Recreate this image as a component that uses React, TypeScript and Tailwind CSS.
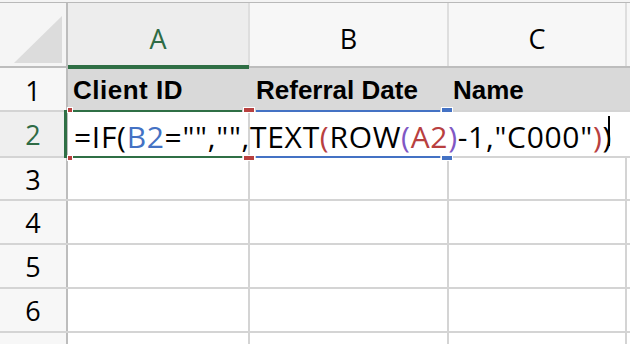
const rowNums = [3, 4, 5, 6];

function Seg({ c, children }: { c?: string; children: React.ReactNode }) {
  return <span className={c}>{children}</span>;
}

export default function App() {
  return (
    <div className="relative w-[630px] h-[344px] overflow-hidden bg-white font-['Open_Sans',sans-serif]">
      {/* top strip */}
      <div className="h-[3px] bg-[#f4f4f4] border-b border-[#b9b9b9]"></div>

      {/* column headers */}
      <div className="flex h-[65px] border-b-2 border-[#bdbdbd] bg-[#f7f7f7]">
        <div className="w-[68px] shrink-0 border-r-2 border-[#bdbdbd] bg-[#f5f5f5] relative">
          <svg width="66" height="63" className="absolute left-0 top-0">
            <polygon points="14,60 62,60 62,13" fill="#dcdcdc" />
          </svg>
        </div>
        <div className="w-[182px] shrink-0 border-r-2 border-[#dedede] bg-[#ededed] flex items-end justify-center pb-[7px] text-[27px] text-[#2e6b45]">
          A
        </div>
        <div className="w-[199px] shrink-0 border-r-2 border-[#dedede] flex items-end justify-center pb-[7px] text-[27px] text-black">
          B
        </div>
        <div className="w-[178px] shrink-0 border-r-2 border-[#dedede] flex items-end justify-center pb-[7px] text-[27px] text-black">
          C
        </div>
        <div className="flex-1"></div>
      </div>

      {/* row 1 */}
      <div className="flex h-[44px] border-b-2 border-[#d4d4d4]">
        <div className="w-[68px] shrink-0 border-r-2 border-[#bdbdbd] bg-[#f7f7f7] flex items-center justify-center pt-[5px] text-[27px] text-black">
          1
        </div>
        <div className="flex-1 flex bg-[#d9d9d9] font-['Liberation_Sans',sans-serif] font-bold text-[26px] text-black">
          <div className="w-[182px] shrink-0 pl-[5px] pt-[3px] flex items-center whitespace-nowrap tracking-[0.5px]">Client ID</div>
          <div className="w-[199px] shrink-0 pl-[6px] pt-[3px] flex items-center whitespace-nowrap">Referral Date</div>
          <div className="w-[178px] shrink-0 pl-[4px] pt-[3px] flex items-center whitespace-nowrap">Name</div>
          <div className="flex-1"></div>
        </div>
      </div>

      {/* row 2 (editing) */}
      <div className="flex h-[46px] border-b-2 border-[#d4d4d4]">
        <div className="w-[68px] shrink-0 border-r-2 border-[#bdbdbd] bg-[#efefef] flex items-center justify-center pt-[3px] text-[27px] text-[#2e6b45]">
          2
        </div>
        <div className="w-[182px] shrink-0 border-r-2 border-[#d4d4d4] pl-[6px] pt-[4px] flex items-center whitespace-nowrap overflow-visible text-[30px] tracking-[0.7px] text-black z-10">
          <span>
            <Seg>=IF(</Seg>
            <Seg c="text-[#4472c4]">B2</Seg>
            <Seg>="",""</Seg>
            <Seg>,TEXT</Seg>
            <Seg c="text-[#b8403f]">(</Seg>
            <Seg>ROW</Seg>
            <Seg c="text-[#8057c4]">(</Seg>
            <Seg c="text-[#b8403f]">A2</Seg>
            <Seg c="text-[#8057c4]">)</Seg>
            <Seg>-1,"C000"</Seg>
            <Seg c="text-[#b8403f]">)</Seg>
            <Seg>)</Seg>
          </span>
        </div>
        <div className="flex-1"></div>
      </div>

      {/* empty rows */}
      {rowNums.map((n) => (
        <div key={n} className={`flex ${n === 3 ? "h-[43px]" : "h-[44px]"} border-b-2 border-[#d4d4d4]`}>
          <div className="w-[68px] shrink-0 border-r-2 border-[#bdbdbd] bg-[#f7f7f7] flex items-center justify-center pt-[3px] text-[27px] text-black">
            {n}
          </div>
          <div className="w-[182px] shrink-0 border-r-2 border-[#d4d4d4]"></div>
          <div className="w-[199px] shrink-0 border-r-2 border-[#d4d4d4]"></div>
          <div className="w-[178px] shrink-0 border-r-2 border-[#d4d4d4]"></div>
          <div className="flex-1"></div>
        </div>
      ))}
      <div className="flex h-[20px]">
        <div className="w-[68px] shrink-0 border-r-2 border-[#bdbdbd] bg-[#f7f7f7]"></div>
        <div className="w-[182px] shrink-0 border-r-2 border-[#d4d4d4]"></div>
        <div className="w-[199px] shrink-0 border-r-2 border-[#d4d4d4]"></div>
        <div className="w-[178px] shrink-0 border-r-2 border-[#d4d4d4]"></div>
      </div>

      {/* selection overlays */}
      <div className="absolute left-[68px] top-[65px] w-[181px] h-[4px] bg-[#2f6f45]"></div>

      {/* active cell A2 */}
      <div className="absolute left-[64px] top-[110px] w-[3px] h-[48px] bg-[#2f6f45] z-20"></div>
      <div className="absolute left-[73px] top-[110px] w-[169px] h-[2px] bg-[#2f6f45] z-20"></div>
      <div className="absolute left-[73px] top-[156px] w-[169px] h-[2px] bg-[#2f6f45] z-20"></div>

      {/* reference B2 */}
      <div className="absolute left-[256px] top-[110px] w-[184px] h-[2px] bg-[#4472c4] z-20"></div>
      <div className="absolute left-[256px] top-[156px] w-[184px] h-[2px] bg-[#4472c4] z-20"></div>

      {/* handles */}
      <div className="absolute left-[67px] top-[107px] w-[6px] h-[6px] bg-[#b8403f] border border-white z-30"></div>
      <div className="absolute left-[67px] top-[155px] w-[6px] h-[6px] bg-[#b8403f] border border-white z-30"></div>
      <div className="absolute left-[243px] top-[107px] w-[12px] h-[6px] bg-[#b8403f] border border-white z-30"></div>
      <div className="absolute left-[243px] top-[155px] w-[12px] h-[6px] bg-[#b8403f] border border-white z-30"></div>
      <div className="absolute left-[441px] top-[107px] w-[12px] h-[6px] bg-[#4472c4] border border-white z-30"></div>
      <div className="absolute left-[441px] top-[155px] w-[12px] h-[6px] bg-[#4472c4] border border-white z-30"></div>

      {/* text cursor */}
      <div className="absolute left-[608px] top-[116px] w-[2px] h-[30px] bg-black z-30"></div>
    </div>
  );
}
